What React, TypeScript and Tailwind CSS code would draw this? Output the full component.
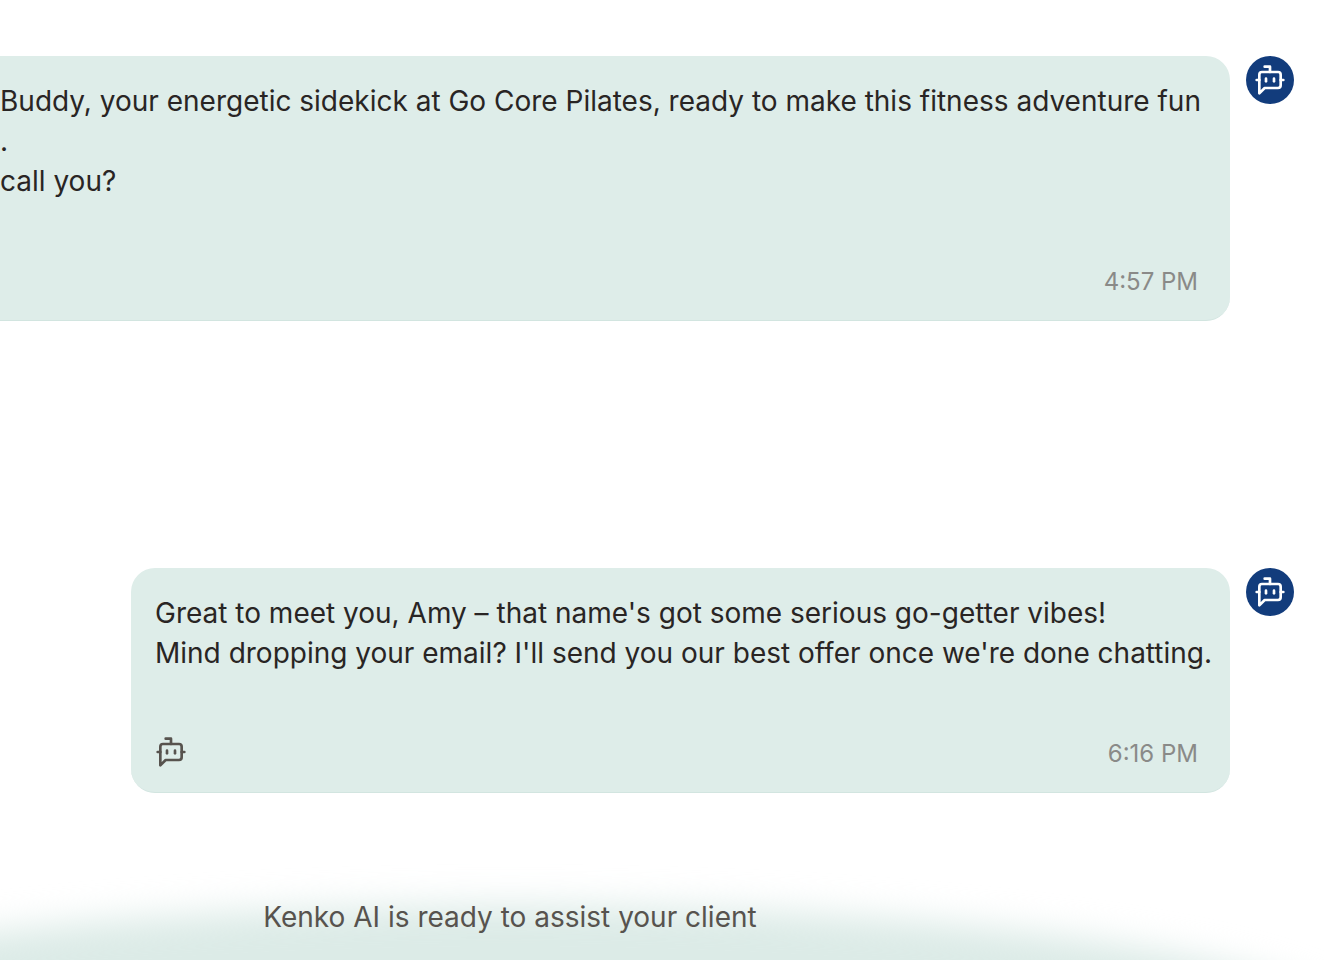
import React from 'react';

interface BotIconProps {
  className?: string;
}

const BotIcon: React.FC<BotIconProps> = ({ className }) => (
  <svg
    viewBox="0 0 24 24"
    fill="none"
    stroke="currentColor"
    strokeWidth="2"
    strokeLinecap="round"
    strokeLinejoin="round"
    aria-hidden="true"
    className={className}
  >
    <path d="M12 6V2H8" />
    <path d="m8 18-4 4V8a2 2 0 0 1 2-2h12a2 2 0 0 1 2 2v8a2 2 0 0 1-2 2Z" />
    <path d="M2 12h2" />
    <path d="M9 11v2" />
    <path d="M15 11v2" />
    <path d="M20 12h2" />
  </svg>
);

const BotAvatar: React.FC = () => (
  <div className="flex size-12 shrink-0 items-center justify-center rounded-full bg-[#123c7c] text-white">
    <BotIcon className="size-8" />
  </div>
);

interface MessageProps {
  lines: string[];
  time: string;
  // the bubble continues past the left edge of the window
  bleed?: boolean;
}

const Message: React.FC<MessageProps> = ({ lines, time, bleed }) => (
  <div className="flex justify-end gap-4 pr-[30px]">
    <div
      className={
        bleed
          ? 'min-w-0 flex-1 rounded-r-3xl border-b border-[#d2e5e0] bg-[#deede9] pt-[25px] pr-6 pb-5'
          : 'w-full max-w-[1099px] rounded-3xl border-b border-[#d2e5e0] bg-[#deede9] px-6 pt-[25px] pb-5'
      }
    >
      {lines.map((line) => (
        <p key={line} className="text-[28px] leading-10 whitespace-nowrap text-[#292524]">
          {line}
        </p>
      ))}
      <div className="mt-[59px] flex h-10 items-end justify-between pr-2">
        {bleed ? <span /> : <BotIcon className="size-8 self-center text-[#57534e]" />}
        <time className="text-2xl leading-9 text-[#8a8a88]">{time}</time>
      </div>
    </div>
    <BotAvatar />
  </div>
);

export default function App() {
  return (
    <main className="relative overflow-hidden bg-white pt-14 font-['Inter','Liberation_Sans',sans-serif]">
      <Message
        bleed
        lines={[
          'Buddy, your energetic sidekick at Go Core Pilates, ready to make this fitness adventure fun',
          '.',
          'call you?',
        ]}
        time="4:57 PM"
      />

      <div className="mt-[247px]">
        <Message
          lines={[
            "Great to meet you, Amy – that name's got some serious go-getter vibes!",
            "Mind dropping your email? I'll send you our best offer once we're done chatting.",
          ]}
          time="6:16 PM"
        />
      </div>

      <footer className="relative mt-16 w-full max-w-[1020px] pt-10 pb-[23px]">
        <div className="absolute top-12 left-1/2 h-[260px] w-[1700px] -translate-x-1/2 rounded-[50%] bg-[#dcebe7] blur-[17px]" />
        <p className="relative text-center text-[28px] leading-10 text-[#57534e]">
          Kenko AI is ready to assist your client
        </p>
      </footer>
    </main>
  );
}
